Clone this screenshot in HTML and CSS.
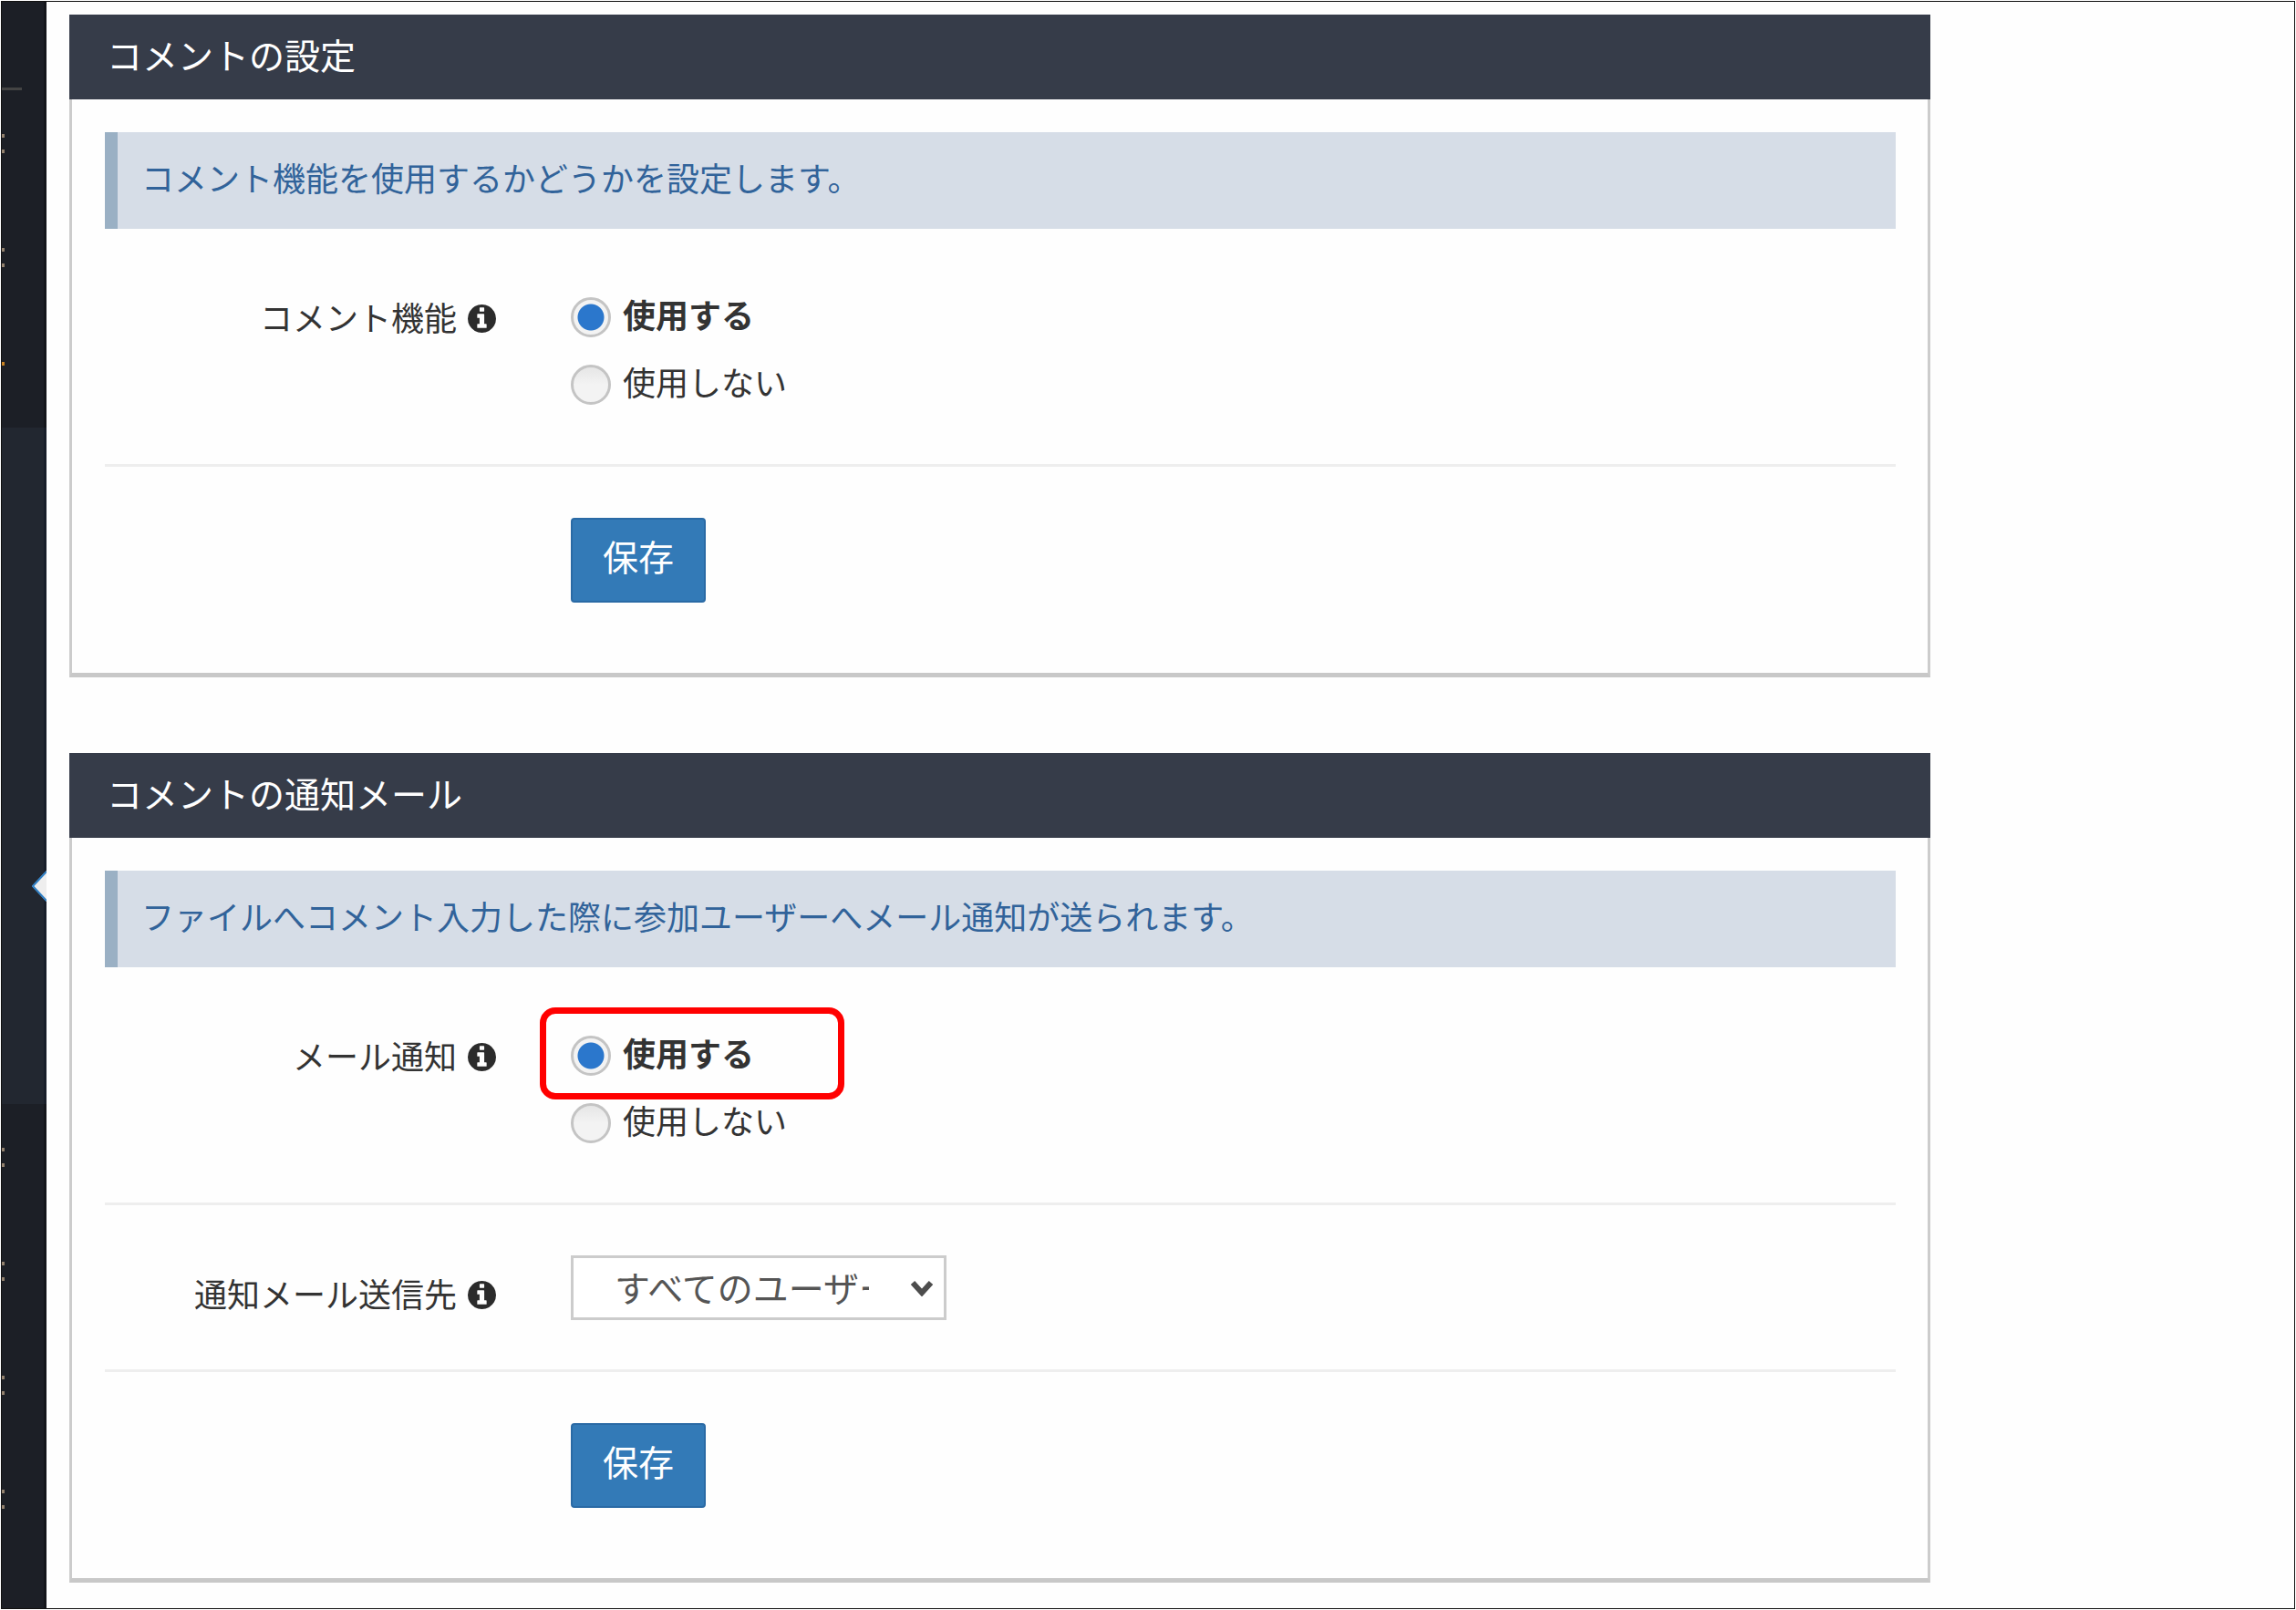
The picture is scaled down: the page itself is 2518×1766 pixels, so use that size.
FILE: index.html
```html
<!DOCTYPE html>
<html lang="ja">
<head>
<meta charset="utf-8">
<meta name="viewport" content="width=device-width, initial-scale=1">
<title>コメントの設定</title>
<link rel="stylesheet" href="styles.css">
</head>
<body>
<svg class="sprite" aria-hidden="true">
  <symbol id="info" viewBox="128 128 1536 1536"><path d="M1152 1376v-160q0-14-9-23t-23-9h-96v-512q0-14-9-23t-23-9h-320q-14 0-23 9t-9 23v160q0 14 9 23t23 9h96v320h-96q-14 0-23 9t-9 23v160q0 14 9 23t23 9h448q14 0 23-9t9-23zm-128-896v-160q0-14-9-23t-23-9h-192q-14 0-23 9t-9 23v160q0 14 9 23t23 9h192q14 0 23-9t9-23zm640 416q0 209-103 385.500t-279.500 279.500-385.500 103-385.500-103-279.500-279.500-103-385.500 103-385.500 279.500-279.500 385.500-103 385.500 103 279.500 279.500 103 385.500z"/></symbol>
</svg>
<div class="app">
  <aside class="sidebar">
    <div class="side-group side-top">
      <div class="side-rule"></div>
      <div class="side-items">
        <span class="dots"></span>
        <span class="dots"></span>
        <span class="dots alert-dot"></span>
      </div>
    </div>
    <div class="side-group side-active">
      <svg class="side-arrow" viewBox="0 0 16 34" aria-hidden="true"><path d="M16 0L0 17L16 34Z" fill="#eee"/><path d="M16 1L1 17L16 33" fill="none" stroke="#2f7fc4" stroke-width="2"/></svg>
    </div>
    <div class="side-group side-bottom">
      <div class="side-items">
        <span class="dots"></span>
        <span class="dots"></span>
        <span class="dots"></span>
        <span class="dots"></span>
      </div>
    </div>
  </aside>
  <main class="main">
    <section class="panel">
      <h2 class="panel-title">コメントの設定</h2>
      <form class="panel-body">
        <p class="note">コメント機能を使用するかどうかを設定します。</p>
        <div class="row radios" role="radiogroup" aria-labelledby="l-comment">
          <div class="label" id="l-comment"><span>コメント機能</span><svg class="info"><use href="#info"/></svg></div>
          <div class="options">
            <label class="option"><input type="radio" name="comment" checked><span>使用する</span></label>
            <label class="option"><input type="radio" name="comment"><span>使用しない</span></label>
          </div>
        </div>
        <div class="row actions"><button class="save" type="button">保存</button></div>
      </form>
    </section>
    <section class="panel">
      <h2 class="panel-title">コメントの通知メール</h2>
      <form class="panel-body">
        <p class="note">ファイルへコメント入力した際に参加ユーザーへメール通知が送られます。</p>
        <div class="row radios" role="radiogroup" aria-labelledby="l-mail">
          <div class="label" id="l-mail"><span>メール通知</span><svg class="info"><use href="#info"/></svg></div>
          <div class="options">
            <label class="option marked"><input type="radio" name="mail" checked><span>使用する</span></label>
            <label class="option"><input type="radio" name="mail"><span>使用しない</span></label>
          </div>
        </div>
        <div class="row field">
          <label class="label" for="target"><span>通知メール送信先</span><svg class="info"><use href="#info"/></svg></label>
          <div class="select">
            <select id="target"><option>すべてのユーザー</option></select>
            <svg class="chevron" viewBox="0 0 26 18" aria-hidden="true"><path d="M3 3L13 14L23 3" fill="none" stroke="#4d4d4d" stroke-width="6"/></svg>
          </div>
        </div>
        <div class="row actions"><button class="save" type="button">保存</button></div>
      </form>
    </section>
  </main>
</div>
</body>
</html>
```
FILE: styles.css
```css
*, *::after { box-sizing: border-box; }

body {
  margin: 1px;
  background: #fff;
  color: #333;
  font: 36px/54px "Noto Sans CJK JP", sans-serif;
}

h2, p { margin: 0; }

.sprite { display: none; }

.app {
  display: flex;
  min-height: calc(100vh - 2px);
  border: 1px solid #111;
  background: #fefefe;
}

/* Sidebar */
.sidebar {
  display: flex;
  flex-direction: column;
  flex: 0 0 49px;
  background: #1c1f26;
}

.side-group { border-right: 3px solid #14161b; }

.side-top {
  height: 467px;
  padding-top: 94px;
}

.side-rule {
  width: 22px;
  height: 3px;
  background: #444;
}

.side-active {
  position: relative;
  height: 742px;
  background: #222730;
  border-right-color: #181e29;
}

.side-arrow {
  position: absolute;
  top: 486px;
  right: -3px;
  width: 16px;
  height: 34px;
}

.side-bottom {
  flex: 1;
}

.side-items {
  display: flex;
  flex-direction: column;
  gap: 104px;
  padding-top: 48px;
}

.dots {
  width: 3px;
  height: 21px;
  border: solid #93826f;
  border-width: 4px 0;
}

.alert-dot {
  border-color: #c98222;
  border-bottom: 0;
}

/* Panels */
.main {
  display: flex;
  flex-direction: column;
  gap: 83px;
  flex: 1;
  min-width: 0;
  padding: 14px 25px;
}

.panel {
  max-width: 2041px;
  border: solid #ccc;
  border-width: 0 3px 5px;
  border-bottom-color: #c8c8c8;
}

.panel-title {
  margin: 0 -3px;
  padding: 16px 41px 23px;
  background: #363c49;
  color: #fff;
  font-size: 39px;
  font-weight: 400;
}

.panel-body { padding: 36px 35px 77px 36px; }

.note {
  margin-bottom: 75px;
  padding: 22px 26px 30px;
  border-left: 14px solid #9ab0c4;
  background: #d6dde7;
  color: #31639a;
}

.row {
  display: grid;
  grid-template-columns: minmax(0, 429px) 1fr;
  column-gap: 82px;
  justify-items: start;
}

.radios {
  padding-bottom: 65px;
  border-bottom: 3px solid #eee;
}

.field {
  padding: 55px 0 54px;
  border-bottom: 3px solid #eee;
}

.actions { padding-top: 56px; }

.label {
  display: flex;
  gap: 12px;
  justify-self: end;
  line-height: 42px;
}

.field .label { padding-top: 20px; }

.info {
  width: 31px;
  height: 31px;
  margin-top: 8px;
  fill: #2b2b2b;
}

.options {
  display: flex;
  flex-direction: column;
  gap: 30px;
}

.option {
  display: flex;
  position: relative;
  gap: 13px;
  line-height: 36px;
}

.option input {
  width: 44px;
  height: 44px;
  margin: 0;
  appearance: none;
  border: 3px solid #c4c4c4;
  border-radius: 50%;
  background: linear-gradient(#e6e6e6, #f3f3f3 50%);
}

.option input:checked {
  background: radial-gradient(circle, #2b77cc 14px, #f3f3f3 15px);
}

.option input:checked + span { font-weight: 700; }

.marked::after {
  content: "";
  position: absolute;
  top: -31px;
  left: -34px;
  width: 334px;
  height: 101px;
  border: 7px solid #f00;
  border-radius: 17px;
}

.select {
  position: relative;
  width: 412px;
}

.select select {
  display: block;
  width: 100%;
  height: 71px;
  padding: 0 82px 4px 45px;
  appearance: none;
  border: 3px solid #ccc;
  border-radius: 0;
  background: #fff;
  color: #555;
  font: inherit;
  font-size: 39px;
}

.chevron {
  position: absolute;
  top: 27px;
  right: 14px;
  width: 26px;
  height: 18px;
  pointer-events: none;
}

.save {
  grid-column: 2;
  padding: 12px 33px 23px;
  border: 2px solid #2a6aa5;
  border-radius: 4px;
  background: #337ab7;
  color: #fff;
  font: inherit;
  font-size: 39px;
}
```
